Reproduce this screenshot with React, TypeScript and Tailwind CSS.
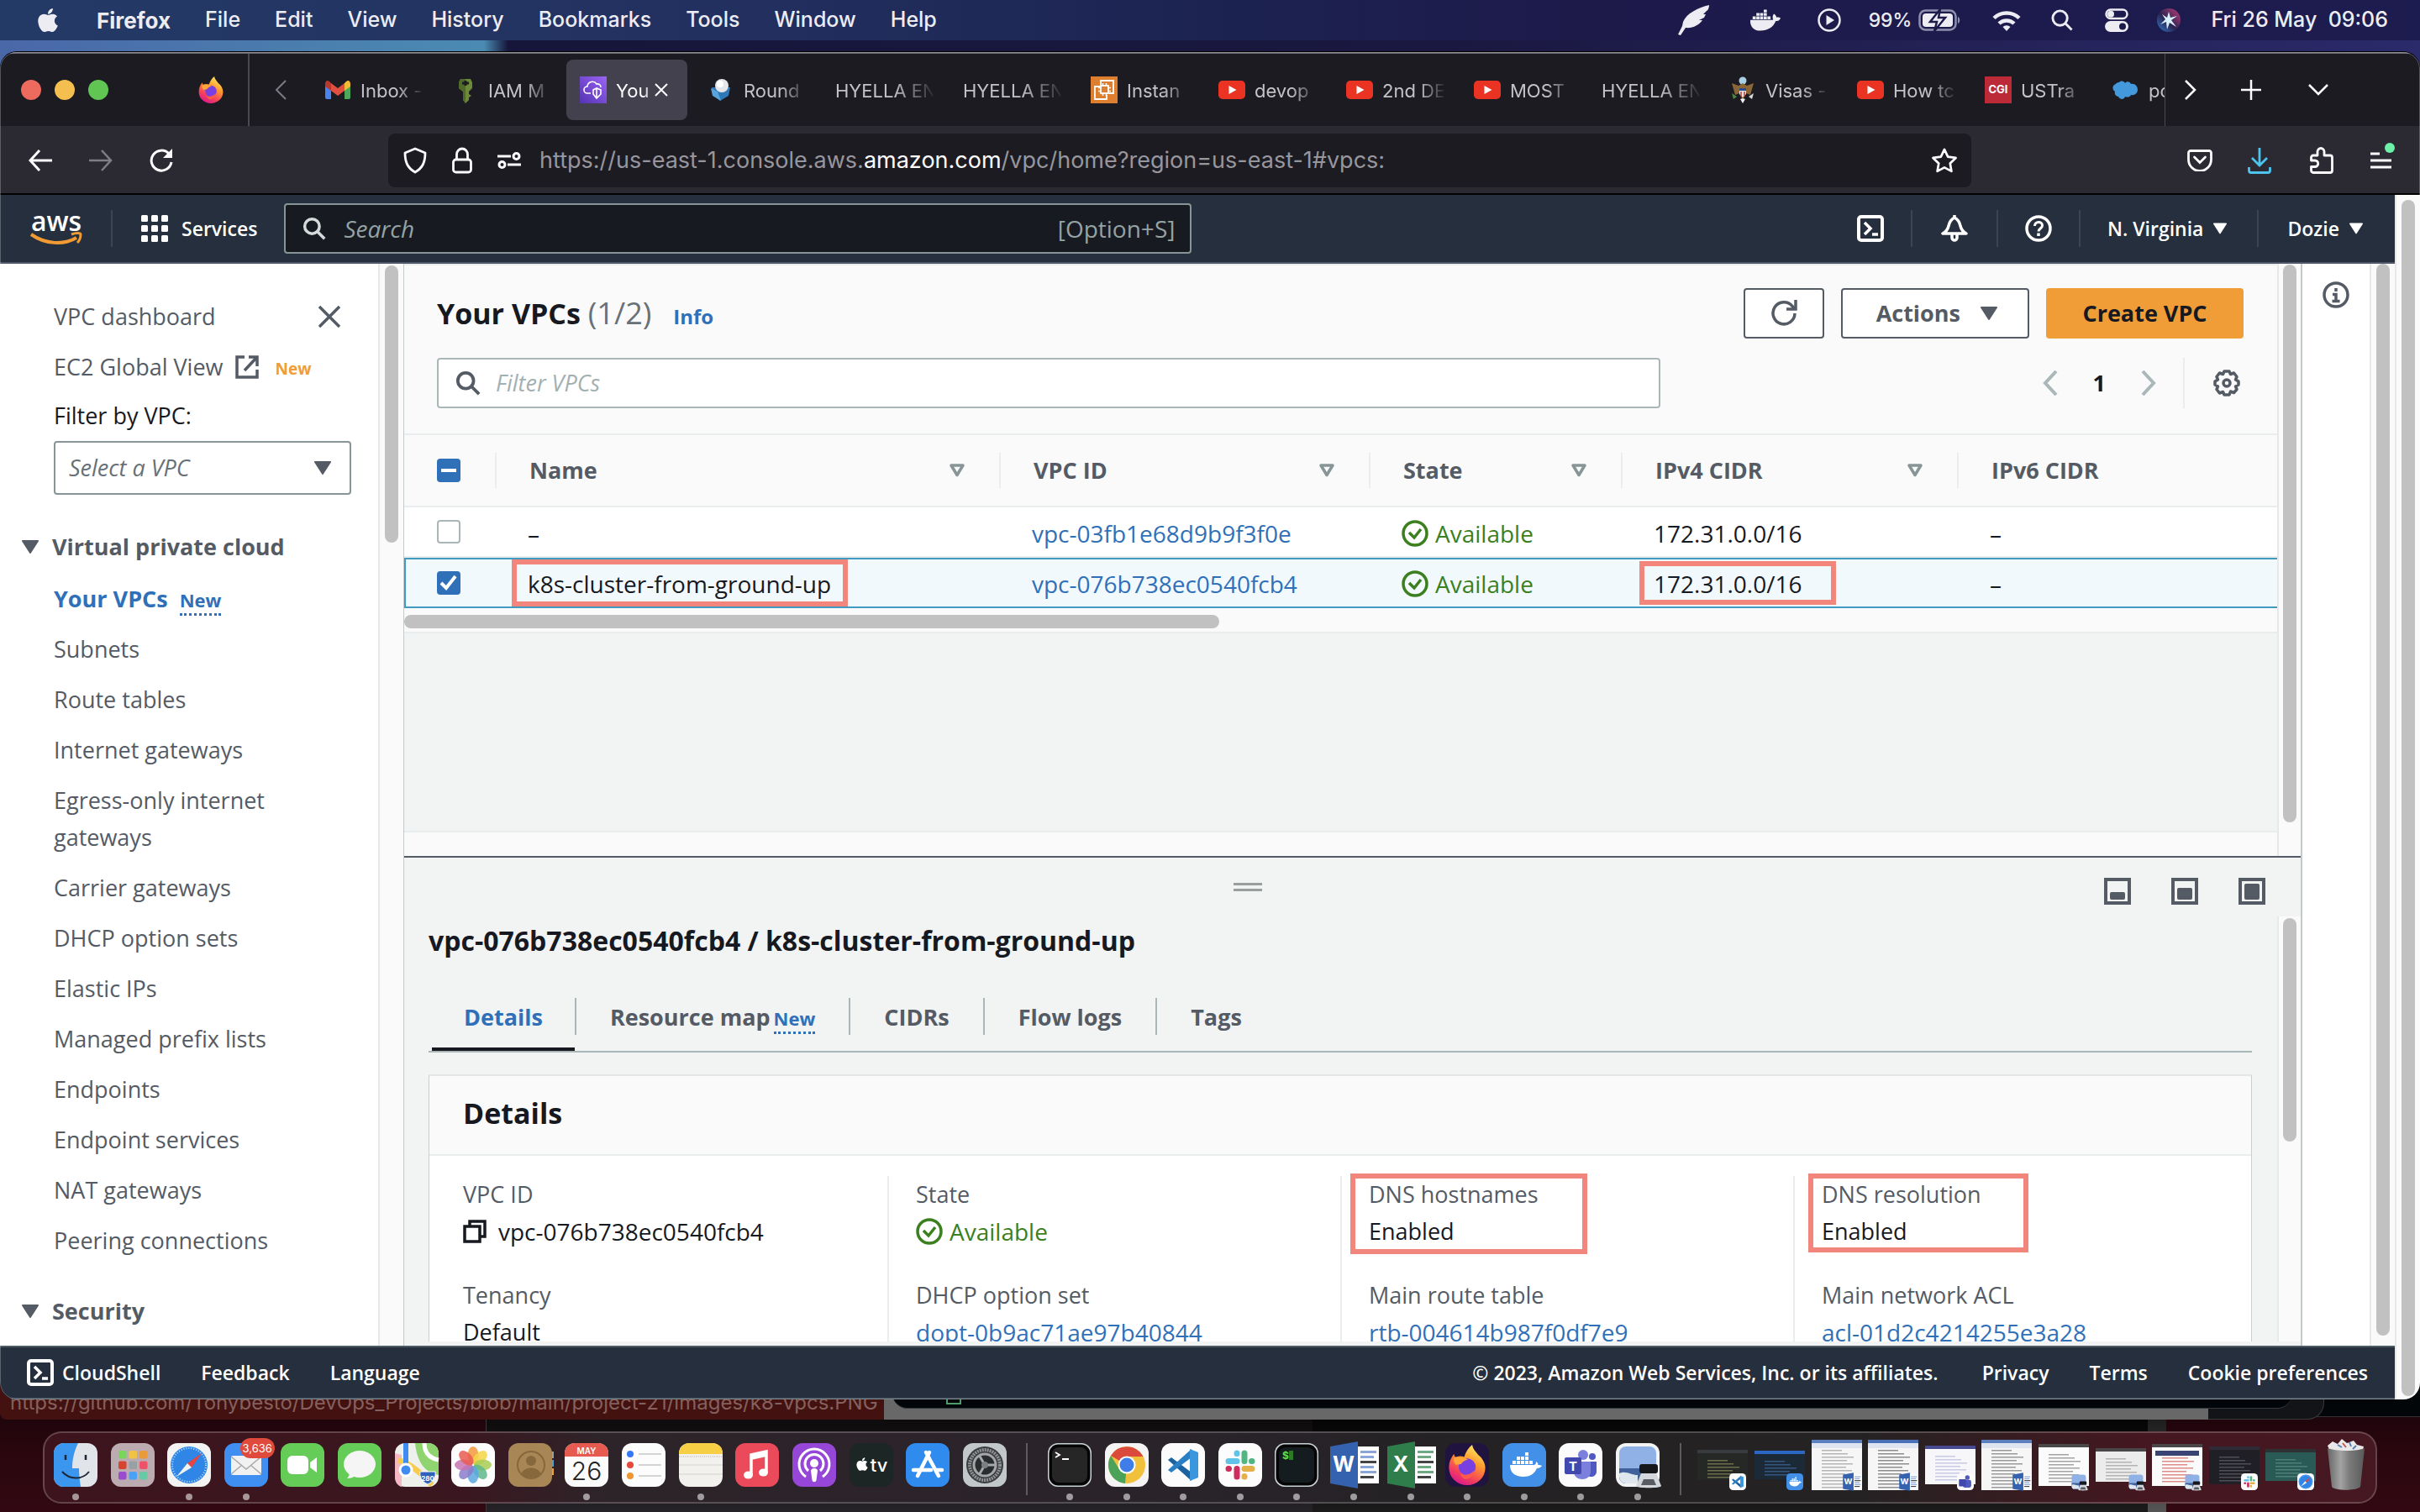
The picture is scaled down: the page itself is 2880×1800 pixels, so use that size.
import React from "react";
import { FaApple, FaDocker } from "react-icons/fa";

/* ---------- small shared pieces ---------- */

function CaretDown({ className = "" }: { className?: string }) {
  return (
    <svg viewBox="0 0 20 16" className={className} aria-hidden="true">
      <path d="M1 0h18a1 1 0 0 1 .8 1.5L10.8 15.5a1 1 0 0 1-1.6 0L.2 1.5A1 1 0 0 1 1 0z" fill="currentColor" />
    </svg>
  );
}

function SortCaret() {
  return (
    <svg viewBox="0 0 20 16" className="h-4 w-5 text-[#879596]" aria-hidden="true">
      <path d="M3 2h14L10 13.5z" fill="none" stroke="currentColor" strokeWidth="3.5" strokeLinejoin="round" />
    </svg>
  );
}

function MagnifierIcon({ className = "" }: { className?: string }) {
  return (
    <svg viewBox="0 0 32 32" className={className} fill="none" stroke="currentColor" strokeWidth="4" aria-hidden="true">
      <circle cx="13" cy="13" r="10" />
      <path d="M20 20l10 10" />
    </svg>
  );
}

function ShellIcon({ className = "" }: { className?: string }) {
  return (
    <svg viewBox="0 0 32 32" className={className} fill="none" stroke="currentColor" strokeWidth="4" aria-hidden="true">
      <rect x="2" y="2" width="28" height="28" rx="3" />
      <path d="M9 9l7 7-7 7" strokeWidth="3.5" />
      <path d="M18 23h7" strokeWidth="3.5" />
    </svg>
  );
}

function OkIcon() {
  return (
    <svg viewBox="0 0 32 32" className="h-8 w-8 shrink-0" fill="none" stroke="currentColor" strokeWidth="3.5" aria-hidden="true">
      <circle cx="16" cy="16" r="14" />
      <path d="M9 15l6 6 8-10" />
    </svg>
  );
}

function VScroll({ thumb, className = "" }: { thumb: string; className?: string }) {
  return (
    <div className={`flex shrink-0 justify-center border-l-2 border-[#e7e8e9] bg-[#fafafa] ${className}`}>
      <div className={`w-4 rounded-full bg-[#c1c1c1] ${thumb}`} />
    </div>
  );
}

/* ---------- macOS menu bar ---------- */

const MENUS = ["File", "Edit", "View", "History", "Bookmarks", "Tools", "Window", "Help"];

function MenuBar() {
  return (
    <header className="flex h-12 shrink-0 items-center bg-[linear-gradient(90deg,#243a66_0%,#223060_30%,#1c2350_50%,#1d1a4a_65%,#1d1c50_100%)] pr-[38px] pl-[42px] text-[25px] font-medium text-[#ececf2]">
      <FaApple className="h-8 w-[30px]" />
      <nav className="ml-[43px] flex gap-[41px]">
        <button className="text-[26px] font-bold">Firefox</button>
        {MENUS.map((m) => (
          <button key={m}>{m}</button>
        ))}
      </nav>
      <div className="ml-auto flex items-center">
        <svg viewBox="0 0 38 36" className="h-9 w-[38px]" fill="currentColor" aria-hidden="true">
          <path d="M37 0C24 3 10 10 6 20l-1 5-5 10 3 1 6-9c8 1 16-3 20-9l-4 0 6-3 2-4-3 0 4-4C36 6 37 3 37 0z" />
        </svg>
        <FaDocker className="ml-12 h-9 w-9" />
        <svg viewBox="0 0 28 28" className="ml-[44px] h-7 w-7" aria-hidden="true">
          <circle cx="14" cy="14" r="12.5" fill="none" stroke="currentColor" strokeWidth="2.5" />
          <path d="M10.5 8l9.5 6-9.5 6z" fill="currentColor" />
        </svg>
        <span className="ml-[33px] text-[23px]">99%</span>
        <svg viewBox="0 0 50 26" className="ml-2 h-[26px] w-[50px]" aria-hidden="true">
          <rect x="1.5" y="1.5" width="43" height="23" rx="7" fill="none" stroke="#8f8fae" strokeWidth="2.5" />
          <rect x="5" y="5" width="36" height="16" rx="4" fill="currentColor" />
          <path d="M47 9c3 1 3 7 0 8z" fill="#8f8fae" />
          <path d="M26 0L14 15h8l-3 11 13-16h-8z" fill="currentColor" stroke="#1d1b4c" strokeWidth="2.5" />
        </svg>
        <svg viewBox="0 0 34 25" className="ml-[38px] h-[25px] w-[34px]" fill="none" stroke="currentColor" strokeWidth="4.5" aria-hidden="true">
          <path d="M2 9.5a21.5 21.5 0 0 1 30 0" />
          <path d="M8 16a13 13 0 0 1 18 0" />
          <path d="M17 25l-4.5-5a6.5 6.5 0 0 1 9 0z" fill="currentColor" stroke="none" />
        </svg>
        <svg viewBox="0 0 27 27" className="ml-9 h-[26px] w-[26px]" fill="none" stroke="currentColor" strokeWidth="3" aria-hidden="true">
          <circle cx="11" cy="11" r="9" />
          <path d="M17.5 17.5l8 8" />
        </svg>
        <svg viewBox="0 0 28 28" className="ml-[38px] h-7 w-7" aria-hidden="true">
          <rect x="1.5" y="1.5" width="25" height="10.5" rx="5.2" fill="none" stroke="currentColor" strokeWidth="2.5" />
          <circle cx="7" cy="6.8" r="4" fill="currentColor" />
          <rect x="0" y="15" width="28" height="13" rx="6.5" fill="currentColor" />
          <circle cx="21" cy="21.5" r="4" fill="#1d1b4c" />
        </svg>
        <svg viewBox="0 0 28 28" className="ml-[34px] h-7 w-7" aria-hidden="true">
          <defs>
            <linearGradient id="siri" x1="0" y1="1" x2="1" y2="0">
              <stop offset="0" stopColor="#2f7fd0" />
              <stop offset=".45" stopColor="#2b2350" />
              <stop offset="1" stopColor="#c23f7c" />
            </linearGradient>
          </defs>
          <circle cx="14" cy="14" r="14" fill="url(#siri)" />
          <path d="M14 4l2 7 8-2-7 5 6 8-8-5-3 8-1-9-7 3 6-6-4-6 6 4z" fill="#d6f1fb" />
        </svg>
        <span className="ml-9 text-[25px] whitespace-pre">Fri 26 May  09:06</span>
      </div>
    </header>
  );
}

/* ---------- Firefox chrome ---------- */

function FirefoxLogo({ className = "" }: { className?: string }) {
  return (
    <svg viewBox="0 0 40 40" className={className} aria-hidden="true">
      <defs>
        <linearGradient id="ffx" x1="0.8" y1="0" x2="0.3" y2="1">
          <stop offset="0" stopColor="#fff36a" />
          <stop offset=".4" stopColor="#ff9a2e" />
          <stop offset=".75" stopColor="#f5405a" />
          <stop offset="1" stopColor="#d9188f" />
        </linearGradient>
      </defs>
      <path d="M25 0c1 5 4 7 6 10 4 3 7 8 7 13a18 17 0 0 1-36 0c0-6 2-10 5-14 0 2 1 3 2 3 3-1 6-1 8 0 2-5 4-9 8-12z" fill="url(#ffx)" />
      <circle cx="20" cy="22" r="8.5" fill="#7a3fe0" />
      <path d="M7 13c6-2 11 0 14 2-4 0-5 2-7 4-2 1-4 0-5 1-2-2-3-5-2-7z" fill="#ffa53a" />
      <path d="M13 28c4 3 11 2 14-3 0 6-4 9-9 9-2 0-4-3-5-6z" fill="#ff5a4a" />
    </svg>
  );
}

function YouTubeIcon() {
  return (
    <svg viewBox="0 0 32 32" className="h-8 w-8 shrink-0">
      <rect y="5" width="32" height="22" rx="5" fill="#ea3323" />
      <path d="M12.5 11l9 5-9 5z" fill="#fff" />
    </svg>
  );
}

function Favicon({ kind }: { kind: string }) {
  const c = "h-8 w-8 shrink-0";
  switch (kind) {
    case "gmail":
      return (
        <svg viewBox="0 0 32 32" className={c}>
          <path d="M1 8v17a2 2 0 0 0 2 2h5V13z" fill="#4a82ee" />
          <path d="M31 8v17a2 2 0 0 1-2 2h-5V13z" fill="#4ea65a" />
          <path d="M24 8v9l7-5V9c0-4-3-5-5-3z" fill="#f3bd33" />
          <path d="M8 8v9l-7-5V9c0-4 3-5 5-3z" fill="#b8382b" />
          <path d="M8 8l8 6 8-6v9l-8 6-8-6z" fill="#e04f3f" />
        </svg>
      );
    case "iam":
      return (
        <svg viewBox="0 0 32 32" className={c}>
          <path d="M10 3h12l2 4v7l-4 4v3l3 2-3 2v3l-4 4-3-4V18l-5-4V7z" fill="#6d8a3a" />
          <path d="M10 3h6v29l-3-4V18l-5-4V7z" fill="#4f6a2a" />
          <path d="M12 8h8M16 5v6" stroke="#1c1b22" strokeWidth="3" />
        </svg>
      );
    case "vpc":
      return (
        <svg viewBox="0 0 32 32" className={c}>
          <defs>
            <linearGradient id="vpcg" x1="0" y1="1" x2="1" y2="0">
              <stop offset="0" stopColor="#5433b0" />
              <stop offset="1" stopColor="#9a63f5" />
            </linearGradient>
          </defs>
          <rect width="32" height="32" fill="url(#vpcg)" />
          <path d="M13 20H9a4 4 0 0 1 0-8 6 6 0 0 1 11-3 4 4 0 0 1 5 4M16 16l4-2 5 2v5l-5 5-4-5zM20 14v12" fill="none" stroke="#fff" strokeWidth="1.6" />
        </svg>
      );
    case "round":
      return (
        <svg viewBox="0 0 32 32" className={c}>
          <path d="M5 13l22 0-2 10-10 6-9-7z" fill="#2f78b8" />
          <path d="M4 14l8 4 4 11-10-6z" fill="#58a4dc" />
          <circle cx="17" cy="11" r="8" fill="#e3e6ea" />
          <circle cx="15" cy="9" r="4" fill="#fff" />
        </svg>
      );
    case "ec2":
      return (
        <svg viewBox="0 0 32 32" className={c}>
          <rect width="32" height="32" fill="#dd7f2e" />
          <path d="M12 10V5h15v15h-5M11 12H5v15h14v-5" fill="none" stroke="#fff" strokeWidth="1.8" />
          <rect x="12" y="11" width="9" height="9" fill="none" stroke="#fff" strokeWidth="1.8" />
          <path d="M14.5 8v3M18.5 8v3M14.5 20v3M18.5 20v3M9 13.5h3M9 17.5h3M21 13.5h3M21 17.5h3" stroke="#fff" strokeWidth="1.5" />
        </svg>
      );
    case "visa":
      return (
        <svg viewBox="0 0 32 32" className={c}>
          <circle cx="16" cy="5" r="4.5" fill="#a9cfe4" />
          <path d="M3 8l8 3 5-3 5 3 8-3-4 14-5-2-4 8-4-8-5 2z" fill="#8a6636" />
          <path d="M12 14h8v7l-4 4-4-4z" fill="#e8e8ea" />
          <path d="M12 14h8v3h-8z" fill="#2c4a8a" />
          <path d="M14 18v6M18 18v6" stroke="#c8352e" strokeWidth="1.5" />
          <path d="M3 20l6 4-4 3z" fill="#4d8a45" />
          <path d="M29 20l-6 4 4 3z" fill="#d7d7d7" />
          <path d="M13 27l3-1 3 1-3 5z" fill="#eee" />
        </svg>
      );
    case "cgi":
      return (
        <span className="flex h-8 w-8 shrink-0 items-center justify-center bg-[#bb2a36] text-[13px] font-bold text-white">CGI</span>
      );
    case "cloud":
      return (
        <svg viewBox="0 0 32 32" className={c}>
          <path d="M8 7c3-3 6-1 7 1 2-3 6-2 7 1 5-1 8 3 8 7s-4 7-8 6c-1 3-5 3-7 2-1 4-6 4-8 0-3 0-5-3-4-6-4-3-3-8 1-9 0-1 2-2 4-2z" fill="#4499dc" />
        </svg>
      );
    default:
      return <YouTubeIcon />;
  }
}

type Tab = { text: string; icon?: string; active?: boolean };
const TABS: Tab[] = [
  { text: "Inbox -", icon: "gmail" },
  { text: "IAM M", icon: "iam" },
  { text: "You", icon: "vpc", active: true },
  { text: "Round", icon: "round" },
  { text: "HYELLA EN" },
  { text: "HYELLA EN" },
  { text: "Instan", icon: "ec2" },
  { text: "devop", icon: "yt" },
  { text: "2nd DE", icon: "yt" },
  { text: "MOST", icon: "yt" },
  { text: "HYELLA EN" },
  { text: "Visas -", icon: "visa" },
  { text: "How tc", icon: "yt" },
  { text: "USTra", icon: "cgi" },
  { text: "pc", icon: "cloud" },
];

function TabStrip() {
  return (
    <div className="flex h-[86px] shrink-0 items-center bg-[#1c1b22] text-[#fbfbfe]">
      <div className="flex h-full w-[297px] shrink-0 items-center border-r-2 border-[#4b4a50] pl-[25px]">
        <div className="flex gap-4">
          <button aria-label="Close window" className="h-6 w-6 rounded-full bg-[#ec6a5e]" />
          <button aria-label="Minimise window" className="h-6 w-6 rounded-full bg-[#f4bf4f]" />
          <button aria-label="Zoom window" className="h-6 w-6 rounded-full bg-[#61c554]" />
        </div>
        <FirefoxLogo className="ml-[106px] h-8 w-8" />
      </div>
      <button aria-label="Scroll tabs left" className="flex w-[69px] shrink-0 items-center justify-center pl-1">
        <svg viewBox="0 0 14 24" className="h-6 w-3.5" fill="none" stroke="#7c7b82" strokeWidth="2">
          <path d="M13 1L2 12l11 11" />
        </svg>
      </button>
      <div className="flex h-full min-w-0 flex-1 items-center overflow-hidden">
        {TABS.map((t, i) => (
          <div
            key={i}
            className={`mx-1 flex h-[72px] w-36 shrink-0 items-center rounded-lg pr-3 pl-4 ${t.active ? "bg-[#42414d]" : ""}`}
          >
            {t.icon && <Favicon kind={t.icon} />}
            <button
              className={`min-w-0 flex-1 pt-0.5 text-left text-[22px] whitespace-nowrap [mask-image:linear-gradient(90deg,#000_60%,transparent_105%)] ${t.icon ? "ml-[11px]" : ""} ${t.active ? "text-[#fbfbfe]" : "text-[#c3c3c6]"}`}
            >
              {t.text}
            </button>
            {t.active && (
              <button aria-label="Close tab" className="mr-2.5 -ml-2 shrink-0">
                <svg viewBox="0 0 18 18" className="h-[18px] w-[18px]" stroke="#fbfbfe" strokeWidth="2">
                  <path d="M2 2l14 14M16 2L2 16" />
                </svg>
              </button>
            )}
          </div>
        ))}
      </div>
      <div className="flex h-full w-[304px] shrink-0 items-center border-l border-[#4b4a50] pl-[22px]">
        <button aria-label="Scroll tabs right">
          <svg viewBox="0 0 16 24" className="h-6 w-4" fill="none" stroke="currentColor" strokeWidth="2.5">
            <path d="M2 1l11 11L2 23" />
          </svg>
        </button>
        <button aria-label="New tab" className="ml-[52px]">
          <svg viewBox="0 0 24 24" className="h-6 w-6" stroke="currentColor" strokeWidth="2.5">
            <path d="M12 0v24M0 12h24" />
          </svg>
        </button>
        <button aria-label="List all tabs" className="ml-14">
          <svg viewBox="0 0 24 14" className="h-3.5 w-6" fill="none" stroke="currentColor" strokeWidth="2.5">
            <path d="M1 1l11 11L23 1" />
          </svg>
        </button>
      </div>
    </div>
  );
}

function NavBar() {
  return (
    <div className="flex h-[82px] shrink-0 items-center border-b-2 border-black bg-[#2b2a33] pt-0.5 pr-[34px] pl-[34px] text-[#fbfbfe]">
      <div className="flex gap-11">
        <button aria-label="Back">
          <svg viewBox="0 0 28 26" className="h-[26px] w-7" fill="none" stroke="currentColor" strokeWidth="3">
            <path d="M28 13H2M13 1L2 13l11 12" />
          </svg>
        </button>
        <button aria-label="Forward" className="text-[#7f7e85]">
          <svg viewBox="0 0 28 26" className="h-[26px] w-7" fill="none" stroke="currentColor" strokeWidth="2.5">
            <path d="M0 13h26M15 1l11 12-11 12" />
          </svg>
        </button>
        <button aria-label="Reload">
          <svg viewBox="0 0 28 28" className="h-7 w-7" fill="none" stroke="currentColor" strokeWidth="3">
            <path d="M26 16a12 12 0 1 1-3-10l2 2" />
            <path d="M27 0v11H16z" fill="currentColor" stroke="none" />
          </svg>
        </button>
      </div>
      <div className="ml-64 flex h-16 flex-1 items-center rounded-lg bg-[#1c1b22] pr-4 pl-[18px]">
        <svg viewBox="0 0 28 32" className="h-8 w-7" fill="none" stroke="currentColor" strokeWidth="2.8" aria-hidden="true">
          <path d="M14 2l12 5c0 11-3 18-12 23C5 25 2 18 2 7z" strokeLinejoin="round" />
        </svg>
        <svg viewBox="0 0 24 32" className="ml-[30px] h-8 w-6" fill="none" stroke="currentColor" strokeWidth="2.8" aria-hidden="true">
          <rect x="1.5" y="15" width="21" height="15" rx="3" />
          <path d="M5.5 15V9a6.5 7 0 0 1 13 0v6" />
        </svg>
        <svg viewBox="0 0 28 20" className="ml-[30px] h-5 w-7" fill="none" stroke="currentColor" strokeWidth="3" aria-hidden="true">
          <path d="M0 5h16M12 15h16" />
          <circle cx="22.5" cy="5" r="3.5" />
          <circle cx="5.5" cy="15" r="3.5" />
        </svg>
        <div className="ml-[22px] text-[27px] text-[#97969d]">
          https://us-east-1.console.aws.<span className="text-[#fbfbfe]">amazon.com</span>/vpc/home?region=us-east-1#vpcs:
        </div>
        <button aria-label="Bookmark this page" className="ml-auto">
          <svg viewBox="0 0 32 31" className="h-[30px] w-8" fill="none" stroke="currentColor" strokeWidth="2.8" strokeLinejoin="round">
            <path d="M16 2l4.3 9 9.7 1.3-7 6.8 1.7 9.7L16 24.2l-8.7 4.6L9 19.1l-7-6.8L11.7 11z" />
          </svg>
        </button>
      </div>
      <div className="ml-[257px] flex items-center">
        <button aria-label="Save to Pocket">
          <svg viewBox="0 0 30 26" className="h-[26px] w-[30px]" fill="none" stroke="currentColor" strokeWidth="2.8">
            <path d="M4 1.5h22a2.5 2.5 0 0 1 2.5 2.5v8a13 13 0 0 1-27 0V4A2.5 2.5 0 0 1 4 1.5z" />
            <path d="M8.5 9l6.5 6.5L21.5 9" strokeLinecap="round" />
          </svg>
        </button>
        <button aria-label="Downloads" className="ml-[42px] text-[#4dc4ee]">
          <svg viewBox="0 0 28 32" className="h-8 w-7" fill="none" stroke="currentColor" strokeWidth="2.8">
            <path d="M14 1v21M5 13l9 9 9-9M1.5 24v4a2.5 2.5 0 0 0 2.5 2.5h20a2.5 2.5 0 0 0 2.5-2.5v-4" />
          </svg>
        </button>
        <button aria-label="Extensions" className="ml-[46px]">
          <svg viewBox="0 0 28 32" className="h-8 w-7" fill="none" stroke="currentColor" strokeWidth="2.8" strokeLinejoin="round">
            <path d="M9 10V5.5a4 4 0 0 1 8 0V10h7a2.5 2.5 0 0 1 2.5 2.5V28a2.5 2.5 0 0 1-2.5 2.5H4A2.5 2.5 0 0 1 1.5 28v-4.5H6a3.5 3.5 0 0 0 0-7.5H1.5v-3.5A2.5 2.5 0 0 1 4 10z" />
          </svg>
        </button>
        <button aria-label="Open application menu" className="relative ml-11">
          <svg viewBox="0 0 25 20" className="h-5 w-[25px]" stroke="currentColor" strokeWidth="2.8">
            <path d="M0 2h11M0 10h25M0 18h25" />
          </svg>
          <span className="absolute -top-[11px] -right-1 h-3 w-3 rounded-full bg-[#6ff0a8]" />
        </button>
      </div>
    </div>
  );
}

/* ---------- AWS console ---------- */

function HeaderRule() {
  return <span className="h-11 w-0.5 shrink-0 bg-[#3a4554]" />;
}

function ConsoleHeader() {
  return (
    <header className="flex h-[82px] shrink-0 items-center border-b-2 border-[#4f5868] bg-[#252f3d] pr-[38px] pl-[35px] text-[23px] font-semibold text-white">
      <a href="#aws" aria-label="AWS home" className="relative flex h-11 w-16 justify-center">
        <span className="text-[32px] leading-[26px] font-semibold">aws</span>
        <svg viewBox="0 0 64 18" className="absolute bottom-0 left-0 h-[18px] w-16" fill="none" stroke="#f29b34">
          <path d="M2 3c17 12 39 13 54 4" strokeWidth="4" />
          <path d="M50 3c5-2 11-2 11 0s-1 7-4 10" strokeWidth="3" />
        </svg>
      </a>
      <span className="ml-[33px]" />
      <HeaderRule />
      <button className="ml-[34px] flex items-center gap-4">
        <svg viewBox="0 0 32 32" className="h-8 w-8" fill="currentColor" aria-hidden="true">
          {[0, 12, 24].map((y) => [0, 12, 24].map((x) => <rect key={`${x}-${y}`} x={x} y={y} width="8" height="8" rx="1.5" />))}
        </svg>
        Services
      </button>
      <label className="ml-8 flex h-[60px] w-full max-w-[1080px] items-center rounded-sm border-2 border-[#879596] bg-[#171a20] pr-[18px] pl-5 text-[28px] font-normal text-[#95a3a4]">
        <MagnifierIcon className="h-7 w-7 shrink-0 text-[#d5dbdb]" />
        <input
          aria-label="Search"
          placeholder="Search"
          className="ml-[21px] min-w-0 flex-1 bg-transparent italic outline-none placeholder:text-[#95a3a4]"
        />
        <span>[Option+S]</span>
      </label>
      <div className="ml-auto flex items-center">
        <button aria-label="CloudShell">
          <ShellIcon className="h-8 w-8" />
        </button>
        <span className="mr-[34px] ml-8 flex"><HeaderRule /></span>
        <button aria-label="Notifications">
          <svg viewBox="0 0 32 32" className="h-8 w-8" fill="none" stroke="currentColor" strokeWidth="3.5" strokeLinejoin="round">
            <path d="M16 3c-4 2-6 5-7 10-1 4-3 7-7 9h28c-4-2-6-5-7-9-1-5-3-8-7-10z" />
            <path d="M13 23v4c0 4 6 4 6 0v-4M16 0v4" />
          </svg>
        </button>
        <span className="mr-8 ml-[34px] flex"><HeaderRule /></span>
        <button aria-label="Help">
          <svg viewBox="0 0 32 32" className="h-8 w-8" fill="none" stroke="currentColor" strokeWidth="3.5">
            <circle cx="16" cy="16" r="14" />
            <path d="M11.5 13c0-6 9-6 9-.5 0 3.5-4.5 3.5-4.5 7" strokeWidth="3" />
            <path d="M16 21.5v3.5" strokeWidth="3.5" />
          </svg>
        </button>
        <span className="mr-8 ml-8 flex"><HeaderRule /></span>
        <button className="flex items-center gap-3">
          N. Virginia <CaretDown className="h-3.5 w-4" />
        </button>
        <span className="mr-[34px] ml-9 flex"><HeaderRule /></span>
        <button className="flex items-center gap-3">
          Dozie <CaretDown className="h-3.5 w-4" />
        </button>
      </div>
    </header>
  );
}

const NAV_LINKS = [
  "Subnets",
  "Route tables",
  "Internet gateways",
  "Egress-only internet gateways",
  "Carrier gateways",
  "DHCP option sets",
  "Elastic IPs",
  "Managed prefix lists",
  "Endpoints",
  "Endpoint services",
  "NAT gateways",
  "Peering connections",
];

function NewTag() {
  return (
    <span className="mt-1 border-b-[3px] border-dotted border-[#2f70b8] text-[22px] leading-8 font-bold text-[#2f70b8]">New</span>
  );
}

function Sidebar() {
  return (
    <aside className="flex w-[450px] shrink-0 flex-col overflow-hidden bg-white pt-[41px] pr-8 pl-16 text-[27px] leading-[44px] text-[#545b64]">
      <div className="flex items-center justify-between">
        <a href="#dashboard">VPC dashboard</a>
        <button aria-label="Close navigation" className="mr-3">
          <svg viewBox="0 0 28 28" className="h-7 w-7" stroke="currentColor" strokeWidth="3.5">
            <path d="M2 2l24 24M26 2L2 26" />
          </svg>
        </button>
      </div>
      <a href="#global" className="mt-4 flex items-center whitespace-nowrap">
        EC2 Global View
        <svg viewBox="0 0 28 28" className="ml-3.5 h-7 w-7" fill="none" stroke="currentColor" strokeWidth="3.5" aria-hidden="true">
          <path d="M11 2H2v24h24v-9M16 2h10v11M26 2L11 18" />
        </svg>
        <span className="mt-1 ml-5 text-[19px] leading-10 font-bold text-[#f09c37]">New</span>
      </a>
      <label htmlFor="vpc-filter" className="mt-3.5 text-[#16191f]">Filter by VPC:</label>
      <div className="relative mt-2 shrink-0">
        <select
          id="vpc-filter"
          defaultValue="none"
          className="h-16 w-full appearance-none rounded-sm border-2 border-[#879596] bg-white pl-4 text-[27px] text-[#687078] italic"
        >
          <option value="none">Select a VPC</option>
        </select>
        <CaretDown className="pointer-events-none absolute top-6 right-6 h-4 w-5" />
      </div>
      <button className="mt-10 -ml-[38px] flex items-center font-bold whitespace-nowrap">
        <CaretDown className="mr-4 h-4 w-5" />
        Virtual private cloud
      </button>
      <a href="#vpcs" className="mt-[18px] flex h-11 items-center gap-3.5 font-bold text-[#2f70b8]">
        Your VPCs <NewTag />
      </a>
      {NAV_LINKS.map((l) => (
        <a key={l} href="#nav" className="mt-4">
          {l}
        </a>
      ))}
      <button className="mt-10 -ml-[38px] flex items-center font-bold">
        <CaretDown className="mr-4 h-4 w-5" />
        Security
      </button>
    </aside>
  );
}

function RowCheckbox({ label, state }: { label: string; state: "off" | "on" | "mixed" }) {
  return (
    <span className={`relative flex h-7 w-7 ${state === "on" ? "ml-[37px]" : "ml-[39px]"}`}>
      <input
        type="checkbox"
        aria-label={label}
        defaultChecked={state !== "off"}
        className={`h-7 w-7 appearance-none rounded ${state === "off" ? "border-2 border-[#aab7b8] bg-white" : "bg-[#2f70b8]"}`}
      />
      {state !== "off" && (
        <svg viewBox="0 0 28 28" className="pointer-events-none absolute inset-0 h-7 w-7" fill="none" stroke="#fff" strokeWidth="4">
          {state === "on" ? <path d="M5 14l6 6L22 6" /> : <path d="M5 14h18" />}
        </svg>
      )}
    </span>
  );
}

const COLUMNS = [
  { name: "Name", width: "w-[600px]" },
  { name: "VPC ID", width: "w-[440px]" },
  { name: "State", width: "w-[300px]" },
  { name: "IPv4 CIDR", width: "w-[400px]" },
  { name: "IPv6 CIDR", width: "" },
];

const ROWS = [
  { name: "–", id: "vpc-03fb1e68d9b9f3f0e", cidr: "172.31.0.0/16", selected: false },
  { name: "k8s-cluster-from-ground-up", id: "vpc-076b738ec0540fcb4", cidr: "172.31.0.0/16", selected: true },
];

function Available() {
  return (
    <span className="flex items-center gap-2 text-[28px] text-[#3b7f1e]">
      <OkIcon /> Available
    </span>
  );
}

function VpcTable() {
  return (
    <table className="w-full shrink-0 table-fixed border-separate border-spacing-0 text-left">
      <thead>
        <tr className="h-[86px] bg-[#fafafa] text-[27px] text-[#545b64]">
          <th className="w-[108px] border-b-2 border-[#eaeded] p-0">
            <RowCheckbox label="Select all VPCs" state="mixed" />
          </th>
          {COLUMNS.map((c, i) => (
            <th key={c.name} className={`border-b-2 border-[#eaeded] p-0 font-bold ${c.width}`}>
              <div className="flex h-[42px] items-center justify-between border-l-2 border-[#eaeded] pr-10 pl-[39px]">
                {c.name}
                {i < 4 && <SortCaret />}
              </div>
            </th>
          ))}
        </tr>
      </thead>
      <tbody>
        {ROWS.map((r) => {
          const cell = r.selected
            ? "border-y-2 border-[#419bc1] bg-[#f1f9fd] pt-0.5 pl-[39px]"
            : "border-b-2 border-[#eaeded] bg-white pt-1 pl-[39px]";
          return (
            <tr key={r.id} className="h-[60px] text-[28px] text-[#16191f]">
              <td className={r.selected ? "border-y-2 border-l-2 border-[#419bc1] bg-[#f1f9fd] p-0" : "border-b-2 border-[#eaeded] bg-white p-0"}>
                <RowCheckbox label={`Select ${r.id}`} state={r.selected ? "on" : "off"} />
              </td>
              <td className={`relative ${cell}`}>
                {r.name}
                {r.selected && <span className="pointer-events-none absolute inset-y-0 left-5 w-[400px] border-[6px] border-[#f2857c]" />}
              </td>
              <td className={cell}>
                <a href="#vpc" className="text-[#2f70b8]">{r.id}</a>
              </td>
              <td className={cell}>
                <Available />
              </td>
              <td className={`relative ${cell}`}>
                {r.cidr}
                {r.selected && <span className="pointer-events-none absolute inset-y-0.5 left-[22px] w-[234px] border-[6px] border-[#f2857c]" />}
              </td>
              <td className={cell}>–</td>
            </tr>
          );
        })}
      </tbody>
    </table>
  );
}

function VpcList() {
  return (
    <section className="flex min-h-0 flex-1 bg-[#fafafa]">
      <div className="flex min-w-0 flex-1 flex-col border-t-2 border-[#eaeded]">
        <div className="flex items-center pt-[27px] pr-10 pl-[39px]">
          <h1 className="text-[34px] leading-[60px] font-bold text-[#16191f]">
            Your VPCs <span className="text-[36px] font-normal text-[#687078]">(1/2)</span>
          </h1>
          <a href="#info" className="mt-2 ml-[26px] text-[24px] font-bold text-[#2f70b8]">Info</a>
          <div className="ml-auto flex gap-5 text-[27px] font-bold text-[#545b64]">
            <button aria-label="Refresh" className="flex h-[60px] w-24 items-center justify-center rounded-sm border-2 border-[#545b64] bg-white">
              <svg viewBox="0 0 32 32" className="h-8 w-8" fill="none" stroke="currentColor" strokeWidth="3.5">
                <path d="M29 16A13 13 0 1 1 26 7.5l3 3" />
                <path d="M30 0v11H19" />
              </svg>
            </button>
            <button className="flex h-[60px] items-center gap-6 rounded-sm border-2 border-[#545b64] bg-white pr-9 pl-10">
              Actions <CaretDown className="h-4 w-5" />
            </button>
            <button className="h-[60px] w-[235px] rounded-sm bg-[#f09d38] text-[#16191f]">Create VPC</button>
          </div>
        </div>
        <div className="mt-[23px] flex items-center pr-11 pl-[39px]">
          <label className="mr-auto flex h-[60px] w-full max-w-[1456px] items-center rounded-sm border-2 border-[#aab7b8] bg-white pl-5 text-[27px]">
            <MagnifierIcon className="h-[30px] w-[30px] shrink-0 text-[#545b64]" />
            <input aria-label="Filter VPCs" placeholder="Filter VPCs" className="ml-[18px] min-w-0 flex-1 italic outline-none placeholder:text-[#a3b0b1]" />
          </label>
          <div className="flex items-center text-[#545b64]">
            <button aria-label="Previous page" className="text-[#aab7b8]">
              <svg viewBox="0 0 18 30" className="h-[30px] w-[18px]" fill="none" stroke="currentColor" strokeWidth="4">
                <path d="M16 1L3 15l13 14" />
              </svg>
            </button>
            <button className="mx-[42px] text-[27px] font-bold text-[#16191f]">1</button>
            <button aria-label="Next page" className="text-[#aab7b8]">
              <svg viewBox="0 0 18 30" className="h-[30px] w-[18px]" fill="none" stroke="currentColor" strokeWidth="4">
                <path d="M2 1l13 14L2 29" />
              </svg>
            </button>
            <span className="ml-8 h-[60px] w-0.5 bg-[#eaeded]" />
            <button aria-label="Preferences" className="ml-[34px]">
              <svg viewBox="0 0 32 32" className="h-8 w-8" fill="none" stroke="currentColor" strokeWidth="3.5" strokeLinejoin="round">
                <path d="M13 2h6l1.5 3.5 4-1.500 3.500 4.500-1.500 3.500 3.500 2v4l-3.500 2 1.500 3.500-3.500 4-4-1.500L19 30h-6l-1.500-3.500-4 1.500L4 23.500l1.500-3.500L2 18v-4l3.500-2L4 8.500 7.500 4l4 1.500z" />
                <circle cx="16" cy="16" r="4" />
              </svg>
            </button>
          </div>
        </div>
        <div className="mt-[30px] h-0.5 shrink-0 bg-[#eaeded]" />
        <VpcTable />
        <div className="h-[30px] shrink-0 border-b-2 border-[#eaeded] pt-2">
          <div className="h-4 w-[970px] rounded-full bg-[#c1c1c1]" />
        </div>
        <div className="flex-1 border-b-2 border-[#eaeded] bg-[#f2f3f3]" />
        <div className="h-7 shrink-0" />
      </div>
      <VScroll className="w-7" thumb="mt-px h-[664px]" />
    </section>
  );
}

function PaneIcon({ y, label }: { y: number; label: string }) {
  return (
    <button aria-label={label}>
      <svg viewBox="0 0 32 32" className="h-8 w-8">
        <rect x="2" y="2" width="28" height="28" fill="none" stroke="currentColor" strokeWidth="4" />
        <rect x="7" y={y} width="18" height={26 - y} rx="2" fill="currentColor" />
      </svg>
    </button>
  );
}

function Field({ label, children }: { label: string; children: React.ReactNode }) {
  return (
    <div className="leading-[44px]">
      <dt className="text-[#545b64]">{label}</dt>
      <dd className="flex items-center text-[#16191f]">{children}</dd>
    </div>
  );
}

function DetailsPane() {
  const link = "text-[28px] text-[#2f70b8]";
  const mark = "pointer-events-none absolute border-[6px] border-[#f2857c]";
  return (
    <section className="flex h-[583px] shrink-0 flex-col border-t-2 border-[#545b64] bg-[#f2f3f3] pb-[5px] text-[#545b64]">
      <div className="flex h-[70px] shrink-0">
        <div className="flex flex-1 items-center justify-center">
          <div className="h-2.5 w-[34px] border-y-[3px] border-[#9a9e9f]" />
        </div>
        <div className="flex items-start gap-12 pt-6 pr-[42px] pl-4">
          <PaneIcon label="Small panel" y={17} />
          <PaneIcon label="Medium panel" y={12} />
          <PaneIcon label="Full panel" y={7} />
        </div>
      </div>
      <div className="flex min-h-0 flex-1">
        <div className="flex min-w-0 flex-1 flex-col overflow-hidden pt-[7px] pr-[30px] pl-[29px]">
          <h2 className="text-[32px] leading-[44px] font-bold text-[#16191f]">vpc-076b738ec0540fcb4 / k8s-cluster-from-ground-up</h2>
          <div role="tablist" className="mt-[27px] flex h-[84px] shrink-0 items-center border-b-2 border-[#aab7b8] pl-1 text-[27px] font-bold">
            <button role="tab" aria-selected="true" className="h-full border-b-4 border-[#16191f] px-[38px] pt-1.5 text-[#2f70b8]">Details</button>
            <span className="h-11 w-0.5 bg-[#aab7b8]" />
            <button role="tab" aria-selected="false" className="flex items-center gap-1 pt-0.5 pr-10 pl-10">
              Resource map <NewTag />
            </button>
            <span className="h-11 w-0.5 bg-[#aab7b8]" />
            <button role="tab" aria-selected="false" className="pt-0.5 pr-10 pl-10">CIDRs</button>
            <span className="h-11 w-0.5 bg-[#aab7b8]" />
            <button role="tab" aria-selected="false" className="pt-0.5 pr-10 pl-10">Flow logs</button>
            <span className="h-11 w-0.5 bg-[#aab7b8]" />
            <button role="tab" aria-selected="false" className="pt-0.5 pr-10 pl-10">Tags</button>
          </div>
          <div className="mt-[26px] shrink-0 border-x border-t-2 border-x-[#c9cfd0] border-t-[#e4e7e7] bg-white">
            <h3 className="flex h-[95px] items-center border-b-2 border-[#eaeded] bg-[#fafafa] pb-1 pl-10 text-[34px] font-bold text-[#16191f]">Details</h3>
            <dl className="grid grid-cols-4 pt-6 pr-1.5 pl-1.5 text-[27px]">
              <div className="space-y-8 pl-[34px]">
                <Field label="VPC ID">
                  <svg viewBox="0 0 28 28" className="mr-3.5 h-7 w-7" fill="none" stroke="currentColor" strokeWidth="3.5" aria-hidden="true">
                    <rect x="2" y="8" width="18" height="18" />
                    <path d="M8 8V2h18v18h-6" />
                  </svg>
                  <span className="text-[28px]">vpc-076b738ec0540fcb4</span>
                </Field>
                <Field label="Tenancy">Default</Field>
              </div>
              <div className="space-y-8 border-l-2 border-[#eaeded] pl-8">
                <Field label="State"><Available /></Field>
                <Field label="DHCP option set"><a href="#dopt" className={link}>dopt-0b9ac71ae97b40844</a></Field>
              </div>
              <div className="relative space-y-8 border-l-2 border-[#eaeded] pl-8">
                <Field label="DNS hostnames">Enabled</Field>
                <Field label="Main route table"><a href="#rtb" className={link}>rtb-004614b987f0df7e9</a></Field>
                <span className={`${mark} -top-[3px] left-2.5 h-24 w-[282px]`} />
              </div>
              <div className="relative space-y-8 border-l-2 border-[#eaeded] pl-8">
                <Field label="DNS resolution">Enabled</Field>
                <Field label="Main network ACL"><a href="#acl" className={link}>acl-01d2c4214255e3a28</a></Field>
                <span className={`${mark} -top-[3px] left-4 h-[94px] w-[262px]`} />
              </div>
            </dl>
          </div>
        </div>
        <VScroll className="w-7" thumb="mt-0.5 h-[266px]" />
      </div>
    </section>
  );
}

function ConsoleFooter() {
  return (
    <footer className="flex h-16 shrink-0 items-center border-y-2 border-[#4c5a66] bg-[#252f3d] px-8 text-[23px] font-semibold text-white">
      <button className="flex items-center gap-2.5">
        <ShellIcon className="h-8 w-8" /> CloudShell
      </button>
      <a href="#feedback" className="ml-12">Feedback</a>
      <button className="ml-12">Language</button>
      <span className="ml-auto">© 2023, Amazon Web Services, Inc. or its affiliates.</span>
      <a href="#privacy" className="ml-[52px]">Privacy</a>
      <a href="#terms" className="ml-12">Terms</a>
      <a href="#cookies" className="ml-12">Cookie preferences</a>
    </footer>
  );
}

function Console() {
  return (
    <div className="flex min-h-0 flex-1 font-['Open_Sans',sans-serif]">
      <div className="flex min-w-0 flex-1 flex-col">
        <ConsoleHeader />
        <div className="flex min-h-0 flex-1">
          <Sidebar />
          <VScroll className="w-[30px]" thumb="mt-0.5 h-[330px]" />
          <main className="flex min-w-0 flex-1 flex-col border-r-2 border-l border-[#c4c9cc]">
            <VpcList />
            <DetailsPane />
          </main>
          <div className="flex w-20 shrink-0 justify-center bg-white pt-[21px]">
            <button aria-label="Open help panel" className="h-8 text-[#545b64]">
              <svg viewBox="0 0 32 32" className="h-8 w-8" fill="none" stroke="currentColor" strokeWidth="3.5">
                <circle cx="16" cy="16" r="14" />
                <path d="M16 8v4M12 15.5h4V23M11.5 23.5h9" />
              </svg>
            </button>
          </div>
          <VScroll className="w-[30px]" thumb="h-full mb-3 max-h-[1276px]" />
        </div>
        <ConsoleFooter />
      </div>
      <div className="flex w-[30px] shrink-0 justify-center border-l-2 border-[#e7e8e9] bg-[#fafafa] pt-1.5 pb-1">
        <div className="w-4 rounded-full bg-[#c1c1c1]" />
      </div>
    </div>
  );
}

/* ---------- Dock ---------- */

function Tile({ fill, children }: { fill: string; children?: React.ReactNode }) {
  return (
    <svg viewBox="0 0 52 52" className="h-[52px] w-[52px] overflow-visible" aria-hidden="true">
      <rect width="52" height="52" rx="12" fill={fill} />
      {children}
    </svg>
  );
}

function Whale({ fill = "#fff" }: { fill?: string }) {
  return (
    <g fill={fill}>
      <path d="M9 26h28c2 0 3-1 3-4 2 1 3 3 2 4 2 0 4 0 5 1-1 2-4 3-6 3-3 7-9 10-16 10-10 0-16-5-16-14z" />
      <path d="M12 21h4v4h-4zM17 21h4v4h-4zM22 21h4v4h-4zM27 21h4v4h-4zM32 21h4v4h-4zM17 16h4v4h-4zM22 16h4v4h-4zM27 16h4v4h-4zM27 11h4v4h-4z" />
    </g>
  );
}

function CodeMark() {
  return (
    <g>
      <path d="M8 20l4-3 24 18v10z" fill="#1d62a0" />
      <path d="M8 32l4 3 24-18V7z" fill="#2a7fc4" />
      <path d="M34 7l10 4v30l-10 4z" fill="#3a97dd" />
    </g>
  );
}

function SlackMark() {
  return (
    <g strokeWidth="7" strokeLinecap="round">
      <path d="M22 12v.5M12 21.500h10" stroke="#5fc3ea" />
      <path d="M31 12v9.500M40 21.500h-.5" stroke="#52b584" />
      <path d="M31 40v-.5M31 30.500h9" stroke="#e3b04a" />
      <path d="M12 30.500h.5M22 30.500v9.500" stroke="#cc2f5e" />
    </g>
  );
}

function CompassMark() {
  return (
    <g>
      <circle cx="26" cy="26" r="22" fill="#2f86e6" />
      <circle cx="26" cy="26" r="20" fill="none" stroke="#bfe0fa" strokeWidth="2" strokeDasharray="1 2" />
      <path d="M41 12L29 29l-5-5z" fill="#e8453c" />
      <path d="M11 40l13-16 5 5z" fill="#f2f2f2" />
    </g>
  );
}

function OfficeMark({ letter, dark, lines }: { letter: string; dark: string; lines: string }) {
  return (
    <g>
      <rect x="22" y="4" width="34" height="44" fill="#fff" />
      {[9, 15, 21, 27, 33, 39].map((y, i) => (
        <rect key={y} x="34" y={y} width={i % 2 ? 16 : 19} height="3" fill={i % 3 === 2 ? "#444" : lines} />
      ))}
      <path d="M-2 4l33-6v56l-33-6z" fill={dark} />
      <text x="14" y="34" textAnchor="middle" fontSize="25" fontWeight="700" fill="#fff">{letter}</text>
    </g>
  );
}

function DockIcon({ kind }: { kind: string }) {
  switch (kind) {
    case "finder":
      return (
        <Tile fill="#e1e5ea">
          <path d="M12 0h17c-5 10-7 20-7 30h8c0 8 1 15 2 22H12A12 12 0 0 1 0 40V12A12 12 0 0 1 12 0z" fill="#3a96ef" />
          <path d="M14 14v6M38 14v6" stroke="#1d2635" strokeWidth="2.5" />
          <path d="M10 34c9 10 24 10 32 0" fill="none" stroke="#1d2635" strokeWidth="2" />
        </Tile>
      );
    case "launchpad":
      return (
        <Tile fill="#bcabb1">
          {["#79d65b", "#f0c245", "#ea9a38", "#d8432f", "#98a0a4", "#ee5268", "#9a4cd0", "#4aa2f5", "#69c9a4"].map((c, i) => (
            <rect key={c} x={9 + (i % 3) * 12.5} y={9 + Math.floor(i / 3) * 12.5} width="9.5" height="9.5" rx="2" fill={c} />
          ))}
        </Tile>
      );
    case "safari":
      return (
        <Tile fill="#f3f3f3">
          <CompassMark />
        </Tile>
      );
    case "mail":
      return (
        <div className="relative">
          <Tile fill="#3f8ff2">
            <rect x="8" y="15" width="36" height="23" rx="2" fill="#f1f1f1" />
            <path d="M8 16l18 15 18-15M8 37l13-11M44 37L31 26" fill="none" stroke="#a9a9ab" strokeWidth="1.5" />
          </Tile>
          <span className="absolute -top-1.5 -right-2 rounded-full bg-[#e04a3c] px-[3px] text-[13px] leading-6 text-white">3,636</span>
        </div>
      );
    case "facetime":
      return (
        <Tile fill="#65cd57">
          <rect x="8" y="15" width="25" height="22" rx="6" fill="#fff" />
          <path d="M35 23l8-6v18l-8-6z" fill="#fff" />
        </Tile>
      );
    case "messages":
      return (
        <Tile fill="#65cd57">
          <ellipse cx="26" cy="25" rx="19" ry="16" fill="#f5f5f5" />
          <path d="M14 34c0 4-1 6-3 8 4 0 8-1 10-4z" fill="#f5f5f5" />
        </Tile>
      );
    case "maps":
      return (
        <Tile fill="#eef0ec">
          <path d="M24 0h16a12 12 0 0 1 12 12v26C36 36 26 22 24 0z" fill="#8fd46f" />
          <path d="M35 0c0 12 6 18 17 20" fill="none" stroke="#fff" strokeWidth="5" />
          <path d="M0 12l8 2v38C3 51 0 46 0 40z" fill="#f4b9c3" />
          <path d="M4 20c14 4 26 14 40 30" fill="none" stroke="#f7cb4d" strokeWidth="7" />
          <path d="M13 0v31" stroke="#3f8cf0" strokeWidth="6" />
          <circle cx="13" cy="32" r="7" fill="#3f8cf0" stroke="#fff" strokeWidth="3" />
          <path d="M30 34h18c1 6-2 12-9 15-7-3-10-9-9-15z" fill="#2f62b8" stroke="#fff" />
          <text x="39" y="45" textAnchor="middle" fontSize="8" fontWeight="700" fill="#fff">280</text>
        </Tile>
      );
    case "photos":
      return (
        <Tile fill="#fcfcfc">
          {["#f39a3b", "#f4d548", "#a8cc55", "#5fb98a", "#5aa7e0", "#8a7cc9", "#c774b4", "#ea5c50"].map((c, i) => (
            <ellipse key={c} cx="26" cy="14.5" rx="6.5" ry="10.5" fill={c} opacity=".85" transform={`rotate(${i * 45} 26 26)`} />
          ))}
        </Tile>
      );
    case "contacts":
      return (
        <Tile fill="#a98655">
          <path d="M52 10h2v8h-2z" fill="#9aa0a5" />
          <path d="M52 20h2v8h-2z" fill="#4aa2dd" />
          <path d="M52 30h2v8h-2z" fill="#e9a13b" />
          <circle cx="27" cy="26" r="16" fill="none" stroke="#86683c" strokeWidth="2" />
          <circle cx="27" cy="21" r="6" fill="#86683c" />
          <path d="M15 37c3-10 21-10 24 0-6 6-18 6-24 0z" fill="#86683c" />
        </Tile>
      );
    case "calendar":
      return (
        <Tile fill="#fbfbfb">
          <path d="M12 0h28a12 12 0 0 1 12 12v4H0v-4A12 12 0 0 1 12 0z" fill="#e65a50" />
          <text x="26" y="12.5" textAnchor="middle" fontSize="10" fontWeight="600" fill="#fff">MAY</text>
          <text x="26" y="44" textAnchor="middle" fontSize="30" fontWeight="300" fill="#222">26</text>
        </Tile>
      );
    case "reminders":
      return (
        <Tile fill="#fcfcfc">
          {[["#3478f6", 13], ["#e5483c", 26], ["#f0962f", 39]].map(([c, y]) => (
            <g key={c}>
              <circle cx="10" cy={y} r="4" fill={c as string} />
              <path d={`M20 ${y}h27`} stroke="#c7c7c9" strokeWidth="1.5" />
            </g>
          ))}
        </Tile>
      );
    case "notes":
      return (
        <Tile fill="#f2f1ed">
          <path d="M12 0h28a12 12 0 0 1 12 12v1H0v-1A12 12 0 0 1 12 0z" fill="#f6cf45" />
          <path d="M0 16h52" stroke="#a9a9a6" strokeDasharray="1 1.5" />
          <path d="M0 26h52M0 37h52" stroke="#d2d1cc" />
        </Tile>
      );
    case "music":
      return (
        <Tile fill="#eb4a5a">
          <path d="M19 38V14l18-4v25" fill="none" stroke="#fff" strokeWidth="3.5" />
          <path d="M19 14l18-4v6l-18 4z" fill="#fff" />
          <ellipse cx="15.5" cy="38" rx="5.5" ry="4.5" fill="#fff" />
          <ellipse cx="33.5" cy="35" rx="5.5" ry="4.5" fill="#fff" />
        </Tile>
      );
    case "podcasts":
      return (
        <Tile fill="#9747d8">
          <g fill="none" stroke="#fff" strokeWidth="3">
            <path d="M16 40a18 18 0 1 1 20 0" />
            <path d="M19 33a11 11 0 1 1 14 0" />
          </g>
          <circle cx="26" cy="24" r="5" fill="#fff" />
          <path d="M22 33c0-4 8-4 8 0l-1.5 11c-.5 3-4.5 3-5 0z" fill="#fff" />
        </Tile>
      );
    case "tv":
      return (
        <Tile fill="#1c2624">
          <g transform="translate(6 16)">
            <FaApple size={18} color="#fff" />
          </g>
          <text x="35" y="34" textAnchor="middle" fontSize="22" fontWeight="500" fill="#fff">tv</text>
        </Tile>
      );
    case "appstore":
      return (
        <Tile fill="#2f8bee">
          <g stroke="#fff" strokeWidth="4.5" strokeLinecap="round">
            <path d="M28 11L14 39M24 11l15 28M9 32h21M36 32h7" />
          </g>
        </Tile>
      );
    case "settings":
      return (
        <Tile fill="#c2c8c9">
          <circle cx="26" cy="26" r="22" fill="#3b3c3e" />
          <circle cx="26" cy="26" r="18" fill="none" stroke="#8f9294" strokeWidth="4" strokeDasharray="2 1" />
          <circle cx="26" cy="26" r="12" fill="#2b2c2e" />
          <circle cx="26" cy="26" r="13" fill="none" stroke="#a4a7a9" strokeWidth="3" />
          <path d="M26 26h13M26 26l-7-12M26 26l-7 12" stroke="#a4a7a9" strokeWidth="3" />
          <circle cx="26" cy="26" r="4" fill="#7d8082" />
        </Tile>
      );
    case "terminal":
    case "iterm":
      return (
        <Tile fill="#c9d2d4">
          <rect x="1.5" y="1.5" width="49" height="49" rx="11" fill="#050505" />
          <rect x="5" y="5" width="42" height="42" rx="8" fill={kind === "terminal" ? "#262626" : "#141c20"} />
          {kind === "terminal" ? (
            <path d="M9 11l5 3-5 3M17 19h8" fill="none" stroke="#fff" strokeWidth="1.8" />
          ) : (
            <g>
              <text x="9" y="19" fontSize="12" fontWeight="700" fill="#5be04a">$</text>
              <rect x="17" y="9" width="5" height="11" fill="#2d7a26" />
            </g>
          )}
        </Tile>
      );
    case "chrome":
      return (
        <Tile fill="#f4f4f4">
          <circle cx="26" cy="26" r="22" fill="#f2c13c" />
          <path d="M26 26L7 15a22 22 0 0 1 38.5 1H26z" fill="#dc4a3c" />
          <path d="M26 26l-2 22A22 22 0 0 1 7 15l10 16z" fill="#4ba258" />
          <circle cx="26" cy="26" r="10.5" fill="#fff" />
          <circle cx="26" cy="26" r="8.5" fill="#3f7de8" />
        </Tile>
      );
    case "vscode":
      return (
        <Tile fill="#fbfbfb">
          <CodeMark />
        </Tile>
      );
    case "slack":
      return (
        <Tile fill="#fcfcfc">
          <SlackMark />
        </Tile>
      );
    case "word":
      return (
        <svg viewBox="0 0 52 52" className="h-[52px] w-[52px] overflow-visible" aria-hidden="true">
          <OfficeMark letter="W" dark="#3562ae" lines="#8aa6d8" />
        </svg>
      );
    case "excel":
      return (
        <svg viewBox="0 0 52 52" className="h-[52px] w-[52px] overflow-visible" aria-hidden="true">
          <OfficeMark letter="X" dark="#2e7d4a" lines="#6fa984" />
        </svg>
      );
    case "firefox":
      return (
        <div className="flex h-[52px] w-[52px] items-center justify-center rounded-xl bg-[#20133f]">
          <FirefoxLogo className="h-12 w-12" />
        </div>
      );
    case "docker":
      return (
        <Tile fill="#4390e8">
          <Whale />
        </Tile>
      );
    case "teams":
      return (
        <Tile fill="#fbfbfc">
          <circle cx="29" cy="14" r="6" fill="#7a80dc" />
          <circle cx="40" cy="16" r="4" fill="#5059c0" />
          <path d="M34 22h11v12c0 6-8 8-11 4z" fill="#5059c0" />
          <path d="M18 22h20v12c0 12-20 12-20 0z" fill="#7a80dc" />
          <rect x="7" y="17" width="20" height="20" rx="2" fill="#4149ae" />
          <text x="17" y="32.5" textAnchor="middle" fontSize="15" fontWeight="700" fill="#fff">T</text>
        </Tile>
      );
    default:
      return (
        <Tile fill="#f1f3f5">
          <PhotoMark />
        </Tile>
      );
  }
}

function PhotoMark() {
  return (
    <g>
      <rect x="4" y="4" width="44" height="44" rx="8" fill="#8fb1e6" />
      <path d="M4 30h44v10a8 8 0 0 1-8 8H12a8 8 0 0 1-8-8z" fill="#41619c" />
      <path d="M4 36c8-4 14 2 22 2v10H12a8 8 0 0 1-8-8z" fill="#dfe7ee" />
      <rect x="28" y="25" width="22" height="11" rx="3" fill="#17181b" />
      <path d="M30 36h18l6 15c0 3-30 3-30 0z" fill="#d4d8dc" />
      <path d="M33 43h12l3 7H30z" fill="#595d63" />
    </g>
  );
}

type ThumbSpec = { top: number; height: number; bg: string; head: string; lines: string; badge: string };
const THUMBS: ThumbSpec[] = [
  { top: 14, height: 36, bg: "#262826", head: "#383b3d", lines: "#6d6f4b", badge: "vscode" },
  { top: 15, height: 34, bg: "#1c2a38", head: "#2b66c4", lines: "#35577f", badge: "docker" },
  { top: 2, height: 60, bg: "#f6f6f6", head: "#5c7fc0", lines: "#b5b5b5", badge: "word" },
  { top: 2, height: 60, bg: "#f6f6f6", head: "#4a70b8", lines: "#8d8d90", badge: "word" },
  { top: 9, height: 46, bg: "#f7f7fa", head: "#474a90", lines: "#c9cbe6", badge: "teams" },
  { top: 2, height: 60, bg: "#f6f6f6", head: "#5c7fc0", lines: "#9a9a9c", badge: "word" },
  { top: 7, height: 50, bg: "#fbfbfb", head: "#4a4748", lines: "#a3a3a3", badge: "preview" },
  { top: 12, height: 40, bg: "#ececec", head: "#4a4748", lines: "#b3b3b3", badge: "preview" },
  { top: 7, height: 50, bg: "#fbfbfb", head: "#4a4748", lines: "#dd8c88", badge: "preview" },
  { top: 10, height: 45, bg: "#1f1f25", head: "#2f2b36", lines: "#4f4f58", badge: "slack" },
  { top: 13, height: 38, bg: "#295a55", head: "#2e3134", lines: "#4e8079", badge: "safari" },
];

function Thumb({ t }: { t: ThumbSpec }) {
  const count = Math.floor((t.height - 12) / 4);
  return (
    <div className="relative -mx-1 flex h-[52px] w-[60px] items-center">
      <svg viewBox="0 0 60 64" className="h-16 w-[60px] shrink-0" aria-hidden="true">
        <rect y={t.top} width="60" height={t.height} fill={t.bg} />
        <rect y={t.top} width="60" height="4" fill={t.head} />
        {t.badge === "word" && <rect y={t.top + 4} width="60" height="6" fill="#dfe5f0" />}
        {Array.from({ length: count }, (_, i) => (
          <rect key={i} x="12" y={t.top + 12 + i * 4} width={24 + ((i * 7) % 15)} height="1.5" fill={t.lines} />
        ))}
        {t.lines === "#dd8c88" && <rect x="4" y={t.top + 8} width="52" height="6" fill="#3a4474" />}
        <svg x="38" y="42" width="20" height="20" viewBox="0 0 52 52" overflow="visible">
          {t.badge !== "word" && t.badge !== "preview" && (
            <rect width="52" height="52" rx="12" fill={t.badge === "docker" ? "#4390e8" : "#fbfbfb"} />
          )}
          {t.badge === "vscode" && <CodeMark />}
          {t.badge === "docker" && <Whale />}
          {t.badge === "slack" && <SlackMark />}
          {t.badge === "safari" && <CompassMark />}
          {t.badge === "word" && <OfficeMark letter="W" dark="#3562ae" lines="#8aa6d8" />}
          {t.badge === "preview" && <PhotoMark />}
          {t.badge === "teams" && (
            <g>
              <circle cx="32" cy="13" r="7" fill="#5059c0" />
              <rect x="18" y="20" width="26" height="24" rx="6" fill="#5059c0" />
              <rect x="6" y="18" width="22" height="22" rx="2" fill="#4149ae" />
            </g>
          )}
        </svg>
      </svg>
    </div>
  );
}

function Trash() {
  return (
    <svg viewBox="0 0 48 64" className="-my-1.5 h-16 w-12" aria-hidden="true">
      <defs>
        <linearGradient id="can" x1="0" x2="1">
          <stop offset="0" stopColor="#666" />
          <stop offset=".35" stopColor="#a3a3a3" />
          <stop offset=".6" stopColor="#7a7a7a" />
          <stop offset="1" stopColor="#5a5a5a" />
        </linearGradient>
      </defs>
      <path d="M2 9l6-5 6 3 5-6 6 5 8-3 4 5 8 2-2 8H6z" fill="#e9e9e9" />
      <path d="M14 8l5 3M28 5l2 5M36 9l-4 4" stroke="#5b7fae" strokeWidth="2" />
      <path d="M20 6l4 5" stroke="#c9574c" strokeWidth="2" />
      <path d="M2 12c10 4 34 4 44 0l-5 46c-4 5-30 5-34 0z" fill="url(#can)" />
    </svg>
  );
}

function DockItem({ running, children }: { running?: boolean; children: React.ReactNode }) {
  return (
    <div className="flex shrink-0 flex-col items-center">
      {children}
      <span className={`mt-2 h-2 w-2 rounded-full ${running ? "bg-white/55" : ""}`} />
    </div>
  );
}

const APPS = ["finder", "launchpad", "safari", "mail", "facetime", "messages", "maps", "photos", "contacts", "calendar", "reminders", "notes", "music", "podcasts", "tv", "appstore", "settings"];
const RUNNING = ["finder", "safari", "mail", "calendar", "notes"];
const OPEN_APPS = ["terminal", "chrome", "vscode", "slack", "iterm", "word", "excel", "firefox", "docker", "teams", "preview"];

function Dock() {
  return (
    <div className="relative mx-[51px] mb-2.5 flex h-[86px] justify-between rounded-[22px] border-2 border-white/20 bg-[linear-gradient(90deg,#3d141e_0%,#3a1720_18%,#2d2429_24%,#29232a_50%,#242224_60%,#252223_78%,#451720_90%,#451822_100%)] px-[11px] pt-3">
      {APPS.map((a) => (
        <DockItem key={a} running={RUNNING.includes(a)}>
          <DockIcon kind={a} />
        </DockItem>
      ))}
      <span className="mx-2 h-[62px] w-0.5 shrink-0 bg-white/25" />
      {OPEN_APPS.map((a) => (
        <DockItem key={a} running>
          <DockIcon kind={a} />
        </DockItem>
      ))}
      <span className="mx-2 h-[62px] w-0.5 shrink-0 bg-white/25" />
      {THUMBS.map((t, i) => (
        <DockItem key={i}>
          <Thumb t={t} />
        </DockItem>
      ))}
      <DockItem>
        <Trash />
      </DockItem>
    </div>
  );
}

/* Windows that peek out under the browser, with the dock in front of them. */
function DesktopBottom() {
  return (
    <div className="relative -mt-5 flex h-[154px] shrink-0 flex-col justify-end overflow-hidden bg-[linear-gradient(180deg,#15040a_0%,#2a060e_55%,#320912_100%)]">
      <div className="absolute top-11 bottom-0 left-[578px] w-[984px] border-l border-[#3a383a] bg-[linear-gradient(180deg,#0d0b0c,#252327)]" />
      <div className="absolute top-11 bottom-0 left-[1562px] w-[994px] bg-[linear-gradient(180deg,#050505,#1b1b1b)]" />
      <div className="absolute top-11 bottom-0 left-[2556px] w-[22px] bg-[linear-gradient(180deg,#1d1d1d,#555)]" />
      <div className="absolute top-0 right-0 left-[2628px] h-[41px] border-b border-[#333] bg-[#030609]" />
      <div className="absolute top-0 left-[1052px] h-11 w-[1577px] bg-[#686868]" />
      <div className="absolute top-0 left-[2628px] h-11 w-[138px] rounded-br-[20px] border-r border-b border-[#3a3a3a] bg-[#131417]" />
      <div className="absolute top-0 left-[1062px] h-[31px] w-[1666px] rounded-b-[18px] border-b border-[#333a3e] bg-[#02060a]" />
      <div className="absolute top-2 left-[1126px] h-[18px] w-[18px] border-2 border-[#4a9c68]" />
      <div className="absolute top-0 left-0 flex h-11 w-[1052px] items-end rounded-bl-lg bg-[#421110] pb-0.5 pl-3 text-[24px] leading-9 whitespace-nowrap text-[#85605c]">
        https://github.com/Tonybesto/DevOps_Projects/blob/main/project-21/images/k8-vpcs.PNG
      </div>
      <Dock />
    </div>
  );
}

export default function App() {
  return (
    <div className="relative flex h-screen w-full flex-col overflow-hidden bg-[#12102f] font-['Inter',sans-serif]">
      <div className="absolute inset-x-0 top-0 h-32 bg-[linear-gradient(90deg,#4a67a8_0%,#4a8bb2_20%,#16153a_21%,#1a1840_60%,#2b2a6a_100%)]" />
      <div className="relative flex min-h-0 flex-1 flex-col">
        <MenuBar />
        <div className="relative z-10 mt-[13px] flex min-h-0 flex-1 flex-col overflow-hidden rounded-[20px] border-t border-black">
          <div className="h-0.5 shrink-0 bg-[#6a696f]" />
          <TabStrip />
          <NavBar />
          <Console />
          <div className="pointer-events-none absolute inset-0 rounded-[20px] border border-white/25" />
        </div>
      </div>
      <DesktopBottom />
    </div>
  );
}
